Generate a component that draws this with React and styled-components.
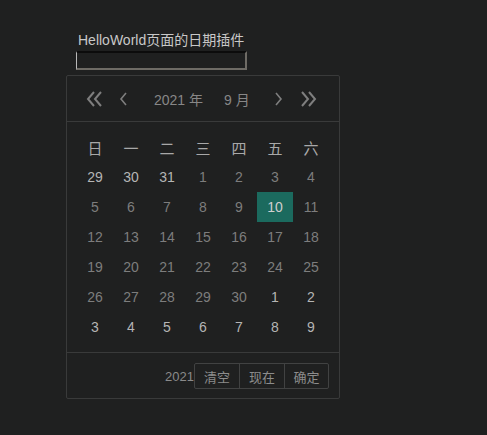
import React from "react";
import styled, { createGlobalStyle } from "styled-components";

const GlobalStyle = createGlobalStyle`
  html, body {
    margin: 0;
    background: #1f2020;
  }
  body {
    font-family: "Liberation Sans", "Noto Sans CJK SC", sans-serif;
    font-size: 14px;
  }
`;

const Page = styled.div`
  padding: 32px 0 0 66px;
  min-height: 435px;
  box-sizing: border-box;
`;

const Title = styled.div`
  margin-left: 12px;
  color: #c8c8c8;
  line-height: 16px;
  height: 19px;
`;

const TextInput = styled.input`
  display: block;
  margin-left: 10px;
  width: 171px;
  height: 19px;
  box-sizing: border-box;
  background: #1f2020;
  border-style: solid;
  border-width: 2px 2px 2px 1px;
  border-color: #0c0c0c #6e6b65 #6e6b65 #b8b8b8;
  outline: none;
  padding: 0;
`;

const Panel = styled.div`
  margin-top: 5px;
  width: 274px;
  box-sizing: border-box;
  border: 1px solid #393a3a;
  border-radius: 2px;
`;

const Header = styled.div`
  height: 45px;
  display: flex;
  align-items: center;
  border-bottom: 1px solid #393a3a;
  padding: 0 19px;
  color: #878787;
  white-space: nowrap;
`;

const Arrow = styled.button`
  background: none;
  border: none;
  padding: 0;
  display: flex;
  align-items: center;
  cursor: pointer;
  margin-left: ${(p) => p.$ml || 0}px;
`;

const Label = styled.span`
  font-size: 14px;
  margin-left: ${(p) => p.$ml || 0}px;
  white-space: nowrap;
`;

const Body = styled.div`
  padding: 10px 10px 10px 10px;
`;

const Grid = styled.div`
  display: grid;
  grid-template-columns: repeat(7, 36px);
  grid-auto-rows: 30px;
`;

const HeadCell = styled.div`
  display: flex;
  align-items: center;
  justify-content: center;
  color: #a8a8a8;
  font-size: 15px;
  padding-top: 1px;
`;

const DayCell = styled.div`
  display: flex;
  align-items: center;
  justify-content: center;
  font-size: 14px;
  color: ${(p) => (p.$selected ? "#cfcfcf" : p.$other ? "#b5b5b5" : "#7d7d7d")};
  background: ${(p) => (p.$selected ? "#1b6a5e" : "transparent")};
`;

const Footer = styled.div`
  border-top: 1px solid #393a3a;
  display: flex;
  justify-content: flex-end;
  align-items: center;
  padding: 10px 10px 9px;
`;

const YearText = styled.span`
  color: #8a8a8a;
  font-size: 13px;
  margin-right: 1px;
`;

const BtnGroup = styled.div`
  display: flex;
`;

const Btn = styled.button`
  height: 26px;
  width: ${(p) => p.$w}px;
  background: transparent;
  color: #8c8c8c;
  border: 1px solid #414242;
  margin-left: -1px;
  font-family: "Noto Sans CJK SC", sans-serif;
  font-size: 13px;
  padding: 0;
  &:first-child {
    border-radius: 2px 0 0 2px;
  }
  &:last-child {
    border-radius: 0 2px 2px 0;
  }
`;

const Chevron = ({ dir, double }) => {
  const flip = dir === "right" ? "scale(-1,1) translate(-18,0)" : undefined;
  return (
    <svg width="18" height="18" viewBox="0 0 18 18" fill="none" stroke="#7e7e7e" strokeWidth="2">
      <g transform={flip}>
        {double ? (
          <>
            <path d="M8 2 L2 9 L8 16" />
            <path d="M15 2 L9 9 L15 16" />
          </>
        ) : (
          <path d="M11 3 L6 9 L11 15" strokeWidth="1.6" />
        )}
      </g>
    </svg>
  );
};

const weekdays = ["日", "一", "二", "三", "四", "五", "六"];

function buildDays() {
  const days = [29, 30, 31].map((d) => ({ d, other: true }));
  for (let i = 1; i <= 30; i++) days.push({ d: i });
  for (let i = 1; i <= 9; i++) days.push({ d: i, other: true });
  return days;
}

export default function App() {
  const days = buildDays();
  return (
    <Page>
      <GlobalStyle />
      <Title>HelloWorld页面的日期插件</Title>
      <TextInput type="text" />
      <Panel>
        <Header>
          <Arrow><Chevron double /></Arrow>
          <Arrow $ml={11}><Chevron /></Arrow>
          <Label $ml={21}>2021 年</Label>
          <Label $ml={21}>9 月</Label>
          <Arrow $ml={19}><Chevron dir="right" /></Arrow>
          <Arrow $ml={12}><Chevron dir="right" double /></Arrow>
        </Header>
        <Body>
          <Grid>
            {weekdays.map((w) => (
              <HeadCell key={w}>{w}</HeadCell>
            ))}
            {days.map((day, i) => (
              <DayCell key={i} $other={day.other} $selected={!day.other && day.d === 10}>
                {day.d}
              </DayCell>
            ))}
          </Grid>
        </Body>
        <Footer>
          <YearText>2021</YearText>
          <BtnGroup>
            <Btn $w={46}>清空</Btn>
            <Btn $w={46}>现在</Btn>
            <Btn $w={45}>确定</Btn>
          </BtnGroup>
        </Footer>
      </Panel>
    </Page>
  );
}
